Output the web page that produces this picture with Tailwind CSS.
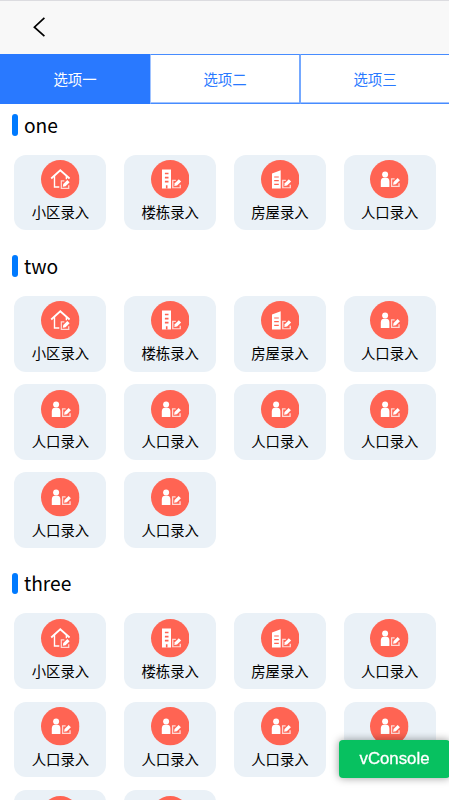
<!DOCTYPE html>
<html lang="zh-CN">
<head>
  <meta charset="UTF-8" />
  <meta name="viewport" content="width=device-width, initial-scale=1.0"/>
  <title>录入</title>
  <script src="https://cdn.jsdelivr.net/npm/@tailwindcss/browser@4"></script>
</head>
<body class="bg-white text-black font-['Noto_Sans_CJK_SC',sans-serif] h-screen overflow-hidden">

  <!-- Icons -->
  <svg class="hidden">
    <symbol id="edit" viewBox="0 0 10 10">
      <path d="M4.2 1.4H1v7.8h7.8V6" fill="none" stroke="#fff" stroke-opacity=".75" stroke-width="1.4"/>
      <path d="M2.6 7.4l.5-2.9L7.3.3l2.4 2.4-4.2 4.2z" fill="#fff"/>
    </symbol>
    <symbol id="community" viewBox="0 0 38.5 38.5">
      <circle cx="19.25" cy="19.25" r="19.25" fill="#ff6453"/>
      <path d="M10.2 18.5l9.1-8.2 9.3 8.2" fill="none" stroke="#fff" stroke-width="1.8"/>
      <path d="M13.5 16v11h4.8M25.4 16v3.2" fill="none" stroke="#fff" stroke-width="1.4"/>
      <use href="#edit" x="19.3" y="19.6" width="9.6" height="9.6"/>
    </symbol>
    <symbol id="building" viewBox="0 0 38.5 38.5">
      <circle cx="19.25" cy="19.25" r="19.25" fill="#ff6453"/>
      <path d="M11 9.6h9v19h-9z" fill="#fff"/>
      <path d="M13.9 13.5h3.6M13.9 17.6h3.6M13.9 21.7h3.6" stroke="#ff6453" stroke-width="1.7"/>
      <path d="M15.7 25.3v3.3" stroke="#ff6453" stroke-width="1.6"/>
      <use href="#edit" x="20.8" y="19" width="9.6" height="9.6"/>
    </symbol>
    <symbol id="house" viewBox="0 0 38.5 38.5">
      <circle cx="19.25" cy="19.25" r="19.25" fill="#ff6453"/>
      <path d="M11 13.6l8.7-3.4v18.4H11z" fill="#fff"/>
      <path d="M13.2 17h4.6M13.2 20.7h4.6M13.2 24.4h4.6" stroke="#ff6453" stroke-width="1.2"/>
      <use href="#edit" x="20.8" y="19" width="9.6" height="9.6"/>
    </symbol>
    <symbol id="person" viewBox="0 0 38.5 38.5">
      <circle cx="19.25" cy="19.25" r="19.25" fill="#ff6453"/>
      <circle cx="15.1" cy="14.5" r="3" fill="#fff"/>
      <path d="M10.8 27v-5.3q0-3.9 3-3.9h2.6q3 0 3 3.9V27z" fill="#fff"/>
      <use href="#edit" x="20.6" y="17.6" width="9.6" height="9.6"/>
    </symbol>
  </svg>

  <!-- Navbar -->
  <header class="h-[54px] bg-[#f8f8f8] border-t border-[#dcdce0] flex items-center pl-8 pb-px">
    <svg class="w-3.5 h-5" viewBox="0 0 14 20" fill="none" stroke="#000" stroke-width="1.7">
      <path d="M12.4.8L2.4 10.2l10 9"/>
    </svg>
  </header>

  <!-- Tabs -->
  <nav class="grid grid-cols-[150px_151px_148px] grid-rows-[50px] h-[50px] text-[14.4px] text-[#2979ff] text-center leading-[50px]">
    <a class="bg-[#2979ff] text-white">选项一</a>
    <a class="border-y border-l border-r-2 border-y-[#478cff] border-l-[#a0c3ff] border-r-[#74a8ff] leading-[48px] shadow-[inset_0_-1px_0_#a0c3ff]">选项二</a>
    <a class="border-y border-[#478cff] leading-[48px] shadow-[inset_0_-1px_0_#a0c3ff]">选项三</a>
  </nav>

  <main id="sections"></main>

  <!-- vConsole -->
  <button class="fixed left-[339px] top-[740px] w-[111px] h-[37.5px] rounded-[4px] bg-[#07c160] text-white text-[16.8px] font-['Liberation_Sans',sans-serif] [-webkit-text-stroke:0.3px_white] shadow-[0_0_8px_rgba(0,0,0,0.4)]">vConsole</button>

  <script>
    const community = { icon: 'community', text: '小区录入' };
    const building = { icon: 'building', text: '楼栋录入' };
    const house = { icon: 'house', text: '房屋录入' };
    const person = { icon: 'person', text: '人口录入' };
    const full = [community, building, house, person, person, person, person, person, person, person];

    const sections = [
      { title: 'one', items: full.slice(0, 4) },
      { title: 'two', items: full },
      { title: 'three', items: full },
    ];

    document.getElementById('sections').innerHTML = sections.map(s => `
      <section class="pt-[10.2px] pb-[14.6px]">
        <h2 class="flex items-center h-[21.6px] pl-[12.4px] text-[19.2px]">
          <span class="w-[6px] h-full rounded-[3px] bg-[#007aff] mr-[5.6px]"></span>
          <span>${s.title}</span>
        </h2>
        <div class="grid grid-cols-4 gap-x-[17.8px] gap-y-[12.6px] pl-[14.4px] pr-[13.4px] mt-[19px]">
          ${s.items.map(i => `
            <div class="h-[75.7px] rounded-[12px] bg-[#eaf1f7] flex flex-col items-center pt-[5.6px]">
              <svg class="w-[38.5px] h-[38.5px]"><use href="#${i.icon}"/></svg>
              <span class="text-[14.4px] leading-[22px] mt-[2px] pl-[0.2px]">${i.text}</span>
            </div>`).join('')}
        </div>
      </section>`).join('');
  </script>
</body>
</html>
